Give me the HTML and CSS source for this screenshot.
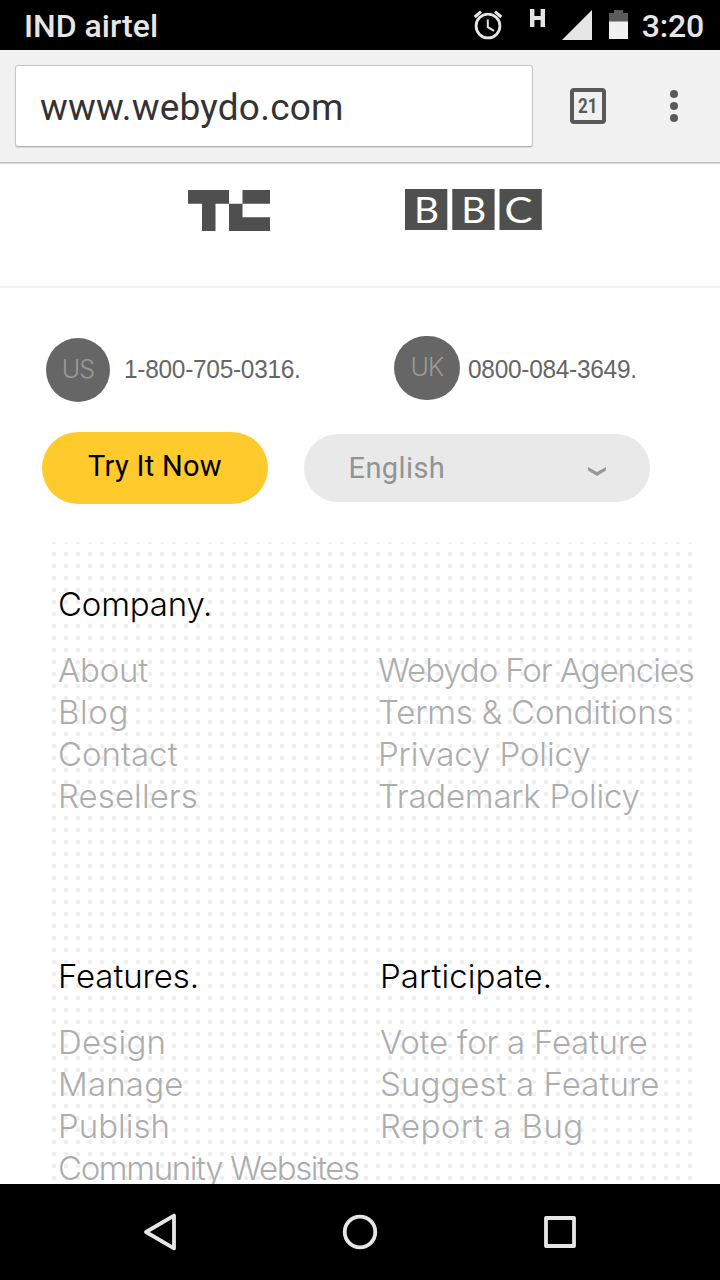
FILE: index.html
```
<!DOCTYPE html>
<html lang="en">
<head>
<meta charset="utf-8">
<title>Webydo</title>
<link rel="stylesheet" href="styles.css">
</head>
<body>
<div class="phone">
  <header class="status">
    <span class="carrier">IND airtel</span>
    <div class="indicators">
      <svg class="alarm" width="30" height="32" viewBox="0 0 30 32" fill="none" stroke="#e6e6e6">
        <circle cx="15" cy="17" r="11.9" stroke-width="2.8"/>
        <path d="M14.8 10.5V18.2L21 21.8" stroke-width="2"/>
        <path d="M1.7 8L8 2.6M22 2.6L28.3 8" stroke-width="3"/>
      </svg>
      <svg class="data" width="15" height="18" viewBox="0 0 15 18" fill="#e6e6e6">
        <path d="M0 0H4.4V7H10.6V0H15V18H10.6V11H4.4V18H0Z"/>
      </svg>
      <svg class="signal" width="30" height="30" viewBox="0 0 30 30" fill="#e6e6e6"><path d="M0 30H30V0Z"/></svg>
      <svg class="battery" width="19" height="29" viewBox="0 0 19 29">
        <path d="M0 3H5V0H14V3H19V12H0Z" fill="#5b5b5b"/>
        <path d="M0 11.5H19V29H0Z" fill="#f0f0f0"/>
      </svg>
      <span class="clock">3:20</span>
    </div>
  </header>

  <div class="toolbar">
    <div class="url">www.webydo.com</div>
    <svg class="tabs" width="36" height="36" viewBox="0 0 36 36">
      <rect x="2" y="2" width="32" height="32" rx="2" fill="none" stroke="#595959" stroke-width="4"/>
      <text x="8" y="25" textLength="19.5" lengthAdjust="spacingAndGlyphs">21</text>
    </svg>
    <svg class="menu" width="8" height="32" viewBox="0 0 8 32" fill="#595959">
      <circle cx="4" cy="4" r="4"/><circle cx="4" cy="16" r="4"/><circle cx="4" cy="28" r="4"/>
    </svg>
  </div>

  <main class="page">
    <section class="press">
      <svg class="tc" width="82" height="41" viewBox="0 0 82 41" fill="#4f4f4f">
        <path d="M0 0H41V13.7H27.5V41H14V13.7H0ZM54.5 0H82V13.7H54.5ZM41 13.7H54.5V27.3H82V41H41Z"/>
      </svg>
      <svg class="bbc" width="137" height="57" viewBox="0 -8 137 57">
        <path d="M0 0H42.3V41H0ZM47.3 0H89.6V41H47.3ZM94.5 0H136.8V41H94.5Z" fill="#4f4f4f"/>
        <text x="9" y="33.8" textLength="25" lengthAdjust="spacingAndGlyphs">B</text>
        <text x="56.3" y="33.8" textLength="25" lengthAdjust="spacingAndGlyphs">B</text>
        <text x="99.6" y="33.8" textLength="28" lengthAdjust="spacingAndGlyphs">C</text>
      </svg>
    </section>

    <section class="contact">
      <div class="line us"><span class="flag">US</span><span class="number">1-800-705-0316.</span></div>
      <div class="line uk"><span class="flag">UK</span><span class="number">0800-084-3649.</span></div>
    </section>

    <section class="actions">
      <button class="try">Try It Now</button>
      <div class="language">
        <span>English</span>
        <svg width="20" height="11" viewBox="0 0 20 11" fill="#999"><path d="M1 1L10 6L19 1V4.5L10 10L1 4.5Z"/></svg>
      </div>
    </section>

    <footer class="links">
      <div class="group company">
        <div class="col">
          <h2 class="ls-a">Company.</h2>
          <a class="ls-a">About</a>
          <a class="ls-f">Blog</a>
          <a>Contact</a>
          <a class="ls-h">Resellers</a>
        </div>
        <div class="col second">
          <a class="ls-w">Webydo For Agencies</a>
          <a class="ls-a">Terms &amp; Conditions</a>
          <a class="ls-b">Privacy Policy</a>
          <a class="ls-d">Trademark Policy</a>
        </div>
      </div>
      <div class="group">
        <div class="col">
          <h2 class="ls-b">Features.</h2>
          <a class="ls-c">Design</a>
          <a class="ls-c">Manage</a>
          <a>Publish</a>
          <a class="ls-x">Community Websites</a>
        </div>
        <div class="col third">
          <h2 class="ls-h">Participate.</h2>
          <a class="ls-d">Vote for a Feature</a>
          <a class="ls-h">Suggest a Feature</a>
          <a class="ls-e">Report a Bug</a>
        </div>
      </div>
    </footer>
  </main>

  <nav class="keys">
    <svg width="36" height="40" viewBox="0 0 36 40"><path d="M4 20L32 3.6V36.4Z"/></svg>
    <svg width="36" height="40" viewBox="0 0 36 40"><circle cx="18" cy="20" r="15.3"/></svg>
    <svg width="36" height="40" viewBox="0 0 36 40"><rect x="4" y="6" width="28" height="28"/></svg>
  </nav>
</div>
</body>
</html>
```
FILE: styles.css
```
* { box-sizing: border-box; }
body { margin: 0; background: #000; font-family: Roboto, sans-serif; }
svg { display: block; flex: none; }

.phone { width: 720px; height: 1280px; display: flex; flex-direction: column; overflow: hidden; background: #fff; }

/* Android status bar */
.status { height: 50px; flex: none; background: #000; color: #e6e6e6; display: flex; justify-content: space-between; font-size: 32px; font-weight: 500; line-height: 52px; padding: 0 16px 0 24px; }
.clock { letter-spacing: -.2px; }
.indicators { display: flex; align-items: flex-start; }
.alarm { margin: 9px 27px 0 0; }
.data { margin: 9px 17px 0 0; }
.signal { margin: 10px 17px 0 0; }
.battery { margin: 10px 14px 0 0; }

/* Browser toolbar */
.toolbar { height: 113px; flex: none; display: flex; align-items: center; background: #f1f1f1; border-bottom: 1px solid #bcbcbc; padding-left: 15px; box-shadow: 0 1px 1px #ddd; position: relative; }
.url { width: 518px; height: 82px; background: #fff; border: 1px solid #c4c4c4; border-bottom-color: #adadad; border-radius: 3px; box-shadow: 0 1px 1px #ddd; color: #333; font-size: 37px; line-height: 83px; letter-spacing: .2px; padding-left: 24px; }
.tabs { margin-left: 37px; }
.tabs text { font: 700 20px Roboto, sans-serif; fill: #595959; }
.menu { margin-left: 64px; }

.page { height: 1021px; flex: none; overflow: hidden; background: #fff; }

.press { height: 125px; border-bottom: 2px solid #f2f2f2; display: flex; align-items: flex-start; padding-left: 187.5px; }
.tc { margin: 27px 135px 0 0; }
.bbc { margin-top: 18px; }
.bbc text { font: 400 37px Lato, sans-serif; fill: #fff; }

.contact { height: 144px; display: flex; padding: 48px 0 0 46px; }
.line { display: flex; font-family: "Liberation Sans", Arial, sans-serif; font-size: 26px; color: #666; }
.flag { width: 64px; height: 64px; border-radius: 32px; background: #666; color: #999; font: 300 25px/63px Inter, sans-serif; letter-spacing: -.8px; text-align: center; }
.number { letter-spacing: -.29px; transform: scaleX(.94); transform-origin: left; white-space: nowrap; }
.us { width: 348px; padding-top: 2px; }
.us .number { margin-left: 14px; line-height: 63px; }
.uk .flag { width: 66px; }
.uk .number { margin-left: 8px; line-height: 67px; }

.actions { height: 110px; display: flex; align-items: flex-start; padding-left: 42px; }
.try { width: 226px; height: 72px; border: 0; border-radius: 36px; background: #ffca2c; color: #000; font: 400 29px/68px Roboto, sans-serif; letter-spacing: .3px; padding: 0 0 4px; }
.language { width: 346px; height: 68px; margin: 2px 0 0 36px; border-radius: 34px; background: #e9e9e9; color: #939393; font-size: 29px; line-height: 68px; letter-spacing: .4px; display: flex; justify-content: space-between; align-items: center; padding: 0 43px 0 44.5px; }
.language svg { margin-top: 7px; }

/* Footer links over a dotted field */
.links { width: 648px; height: 642px; margin-left: 48px; padding: 41px 0 0 10px; background: radial-gradient(circle at 6px 6px, #eee 1.7px, rgba(238,238,238,0) 2.6px) 0 -6px / 12px 12px; color: #adadad; font: 300 33px/42px Inter, sans-serif; }
.group { display: flex; height: 372px; }
.col { width: 320px; flex: none; display: flex; flex-direction: column; white-space: nowrap; }
.second { padding-top: 66px; }
.third { padding-left: 2px; }
h2 { margin: 0 0 24px; color: #000; font: inherit; }
.ls-a { letter-spacing: -.2px; }
.ls-b { letter-spacing: -.1px; }
.ls-c { letter-spacing: .2px; }
.ls-d { letter-spacing: -.25px; }
.ls-e { letter-spacing: .4px; }
.ls-f { letter-spacing: .6px; }
.ls-h { letter-spacing: .08px; }
.ls-w { letter-spacing: -1.1px; }
.ls-x { letter-spacing: -1.38px; }

/* Android navigation keys */
.keys { height: 96px; flex: none; background: #000; display: flex; align-items: center; justify-content: center; gap: 164px; }
.keys svg { fill: none; stroke: #e6e6e6; stroke-width: 3.8px; stroke-linejoin: round; }
```
